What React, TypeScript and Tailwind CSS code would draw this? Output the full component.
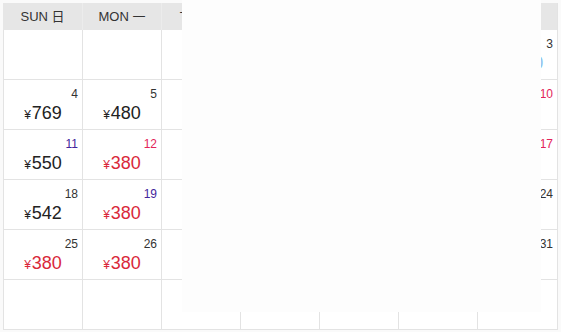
import React from "react";

type Cell = { d?: number; dc?: string; p?: string; pc?: string; px?: string };

const heads = ["SUN 日", "MON 一", "TUE 二", "WED 三", "THU 四", "FRI 五", "SAT 六"];

const DARK = "text-[#333333]";
const RED = "text-[#d9283a]";
const PURPLE = "text-[#43259c]";
const PINK = "text-[#e3245a]";

const rows: Cell[][] = [
  [{}, {}, {}, {}, { d: 1, dc: DARK }, { d: 2, dc: DARK }, { d: 3, dc: DARK, p: "1280", pc: "text-[#8fc3ee]", px: "pl-[4px]" }],
  [
    { d: 4, dc: DARK, p: "769", pc: "text-[#222222]" },
    { d: 5, dc: DARK, p: "480", pc: "text-[#222222]" },
    { d: 6, dc: DARK },
    { d: 7, dc: DARK },
    { d: 8, dc: DARK },
    { d: 9, dc: DARK },
    { d: 10, dc: PINK },
  ],
  [
    { d: 11, dc: PURPLE, p: "550", pc: "text-[#222222]" },
    { d: 12, dc: PINK, p: "380", pc: RED },
    { d: 13, dc: DARK },
    { d: 14, dc: DARK },
    { d: 15, dc: DARK },
    { d: 16, dc: DARK },
    { d: 17, dc: PINK },
  ],
  [
    { d: 18, dc: DARK, p: "542", pc: "text-[#222222]" },
    { d: 19, dc: PURPLE, p: "380", pc: RED },
    { d: 20, dc: DARK },
    { d: 21, dc: DARK },
    { d: 22, dc: DARK },
    { d: 23, dc: DARK },
    { d: 24, dc: DARK },
  ],
  [
    { d: 25, dc: DARK, p: "380", pc: RED },
    { d: 26, dc: DARK, p: "380", pc: RED },
    { d: 27, dc: DARK },
    { d: 28, dc: DARK },
    { d: 29, dc: DARK },
    { d: 30, dc: DARK },
    { d: 31, dc: DARK },
  ],
  [{}, {}, {}, {}, {}, {}, {}],
];

export default function App() {
  return (
    <div
      className="relative w-[561px] h-[332px] bg-[#fafafa] pt-[3px] pl-[3px] overflow-hidden"
      style={{ fontFamily: '"Liberation Sans", Arial, "Noto Sans CJK SC", sans-serif' }}
    >
      <div className="w-[555px] bg-white border-r border-[#e3e3e3]">
        <div className="grid grid-cols-[repeat(6,79px)_80px] h-[27px] bg-[#e6e6e6]">
          {heads.map((h, i) => (
            <div
              key={h}
              className={`flex items-center justify-center text-[13px] text-[#333333] ${
                i === 0 ? "" : "border-l border-[#ececec]"
              }`}
            >
              {h}
            </div>
          ))}
        </div>
        {rows.map((r, ri) => (
          <div key={ri} className="grid grid-cols-[repeat(6,79px)_80px] h-[50px] border-b border-[#e3e3e3]">
            {r.map((c, ci) => (
              <div key={ci} className="border-l border-[#e3e3e3] flex flex-col">
                <div className={`h-[14px] mt-[7px] pr-[4px] text-right text-[12px] leading-[14px] ${c.dc ?? ""}`}>
                  {c.d ?? ""}
                </div>
                {c.p && (
                  <div className={`mt-[2px] flex items-baseline justify-center ${c.pc} ${c.px ?? ""}`}>
                    <span className="text-[12px] leading-[20px] mr-[1px]">¥</span>
                    <span className="text-[18px] leading-[20px]">{c.p}</span>
                  </div>
                )}
              </div>
            ))}
          </div>
        ))}
      </div>
      <div className="absolute left-[182px] top-0 w-[359px] h-[312px] bg-[#fdfdfd]" />
    </div>
  );
}
